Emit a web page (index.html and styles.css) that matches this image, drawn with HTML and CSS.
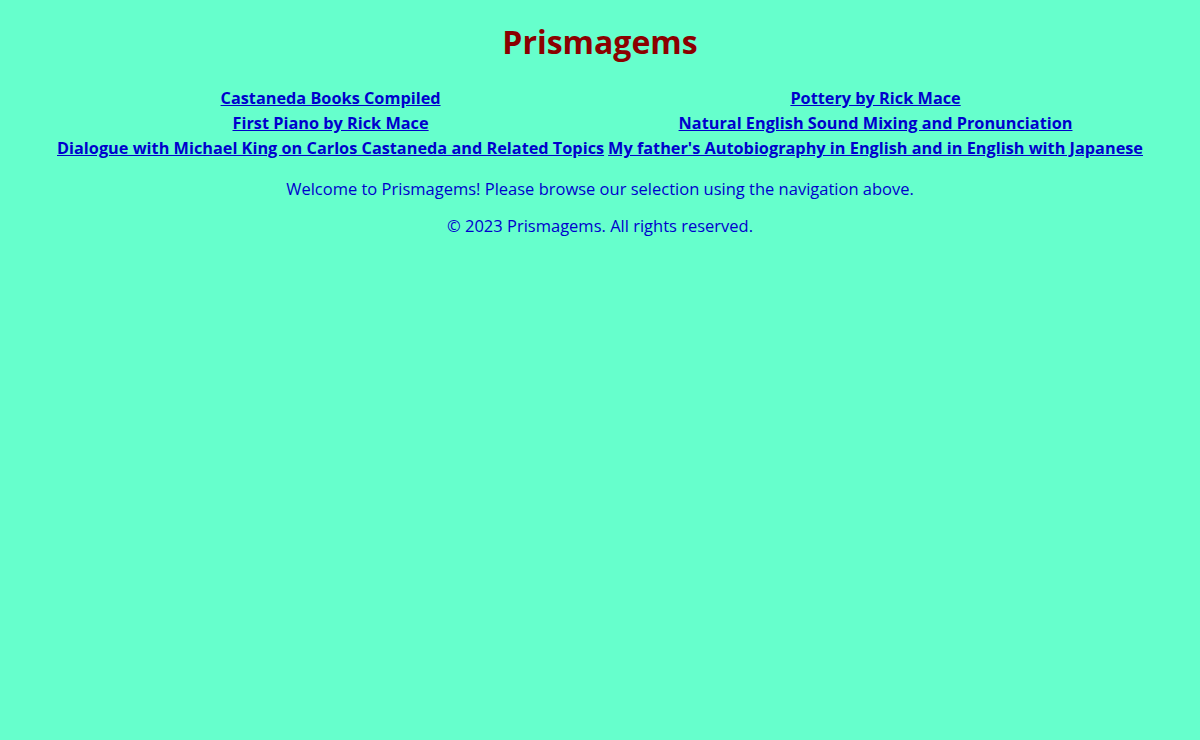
FILE: index.html
```html
<!DOCTYPE html>
<html lang="en">
<head>
<meta charset="utf-8">
<title>Prismagems</title>
<link rel="stylesheet" href="styles.css">
</head>
<body>
<header class="site-header">
  <h1 class="site-title">Prismagems</h1>
</header>
<nav class="site-nav">
  <div class="nav-col">
    <a href="#">Castaneda Books Compiled</a>
    <a href="#">First Piano by Rick Mace</a>
    <a href="#">Dialogue with Michael King on Carlos Castaneda and Related Topics</a>
  </div>
  <div class="nav-col">
    <a href="#">Pottery by Rick Mace</a>
    <a href="#">Natural English Sound Mixing and Pronunciation</a>
    <a href="#">My father's Autobiography in English and in English with Japanese</a>
  </div>
</nav>
<main class="site-main">
  <p class="welcome">Welcome to Prismagems! Please browse our selection using the navigation above.</p>
</main>
<footer class="site-footer">
  <p class="copyright">&copy; 2023 Prismagems. All rights reserved.</p>
</footer>
</body>
</html>
```

FILE: styles.css
```css
html, body {
  margin: 0;
  padding: 0;
}
body {
  background: #66ffcc;
  font-family: "Open Sans", "Noto Sans", sans-serif;
  color: #0000cc;
  text-align: center;
}
.site-header {
  padding-top: 20px;
}
.site-title {
  margin: 0;
  font-size: 32px;
  line-height: 44px;
  color: #8b0000;
  font-weight: 700;
}
.site-nav {
  display: flex;
  justify-content: center;
  gap: 4px;
  margin-top: 22px;
}
.nav-col {
  display: flex;
  flex-direction: column;
  align-items: center;
}
.nav-col a {
  color: #0000cc;
  font-weight: 700;
  font-size: 16.3px;
  line-height: 25px;
  white-space: nowrap;
  text-decoration: underline;
}
.site-main p,
.site-footer p {
  margin: 0;
  font-size: 16.5px;
  line-height: 25px;
}
.welcome {
  padding-top: 15px;
}
.copyright {
  padding-top: 12px;
}
```
